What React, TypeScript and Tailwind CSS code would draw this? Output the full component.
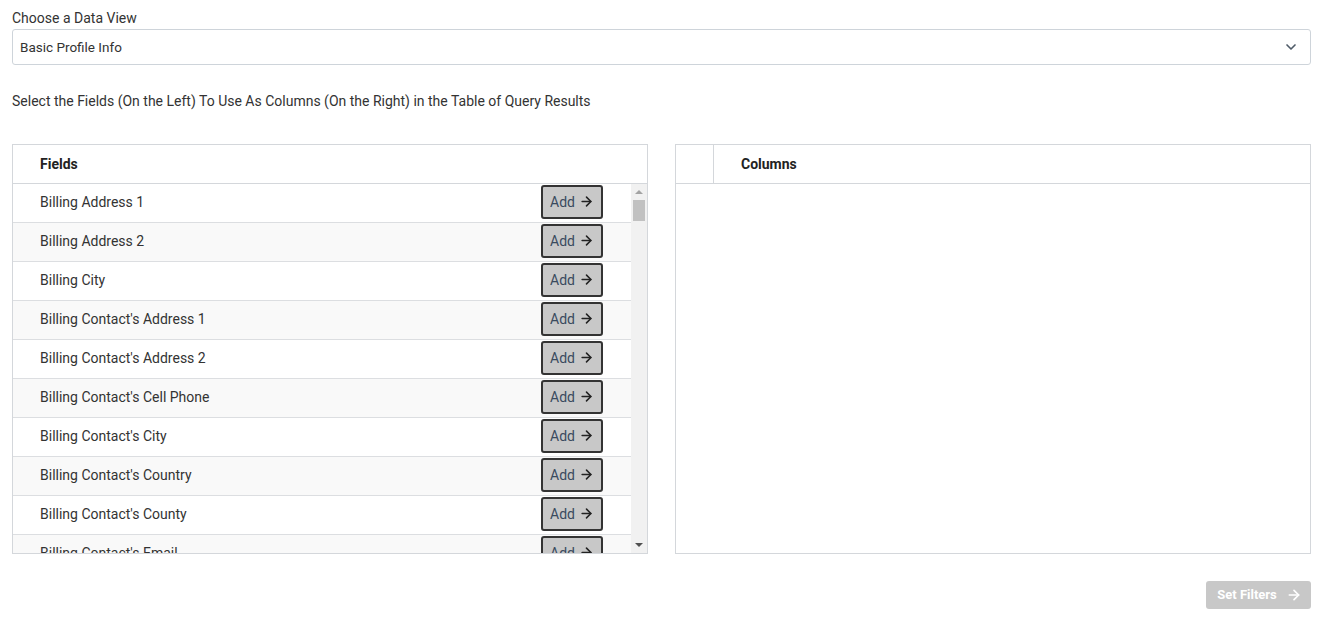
import { ArrowRight, ChevronDown } from 'lucide-react'

const bases = [
  'Address 1', 'Address 2', 'City', 'Country', 'County', 'Email', 'Fax', 'First Name',
  'Last Name', 'Phone', 'Postal Code', 'State', 'Title', 'Work Phone',
]

const fields = [
  'Billing Address 1',
  'Billing Address 2',
  'Billing City',
  "Billing Contact's Address 1",
  "Billing Contact's Address 2",
  "Billing Contact's Cell Phone",
  "Billing Contact's City",
  "Billing Contact's Country",
  "Billing Contact's County",
  "Billing Contact's Email",
  "Billing Contact's Fax",
  "Billing Contact's First Name",
  "Billing Contact's Last Name",
  "Billing Contact's Phone",
  "Billing Contact's Postal Code",
  "Billing Contact's State",
  'Billing Country',
  'Billing County',
  'Billing Postal Code',
  'Billing State',
  ...['Mailing', 'Primary Contact', 'Shipping'].flatMap((p) => bases.map((b) => `${p} ${b}`)),
]

export default function App() {
  return (
    <div className="pl-3 pr-[13px] pt-2 text-[#333] text-[14px]" style={{ fontFamily: 'Roboto, "Noto Sans", sans-serif' }}>
      <div className="leading-5 mb-[1px]">Choose a Data View</div>
      <div className="h-9 border border-[#ced4da] rounded-[3px] flex items-center justify-between pl-[7px] pr-[11px]">
        <span className="text-[13.5px] text-[#333]">Basic Profile Info</span>
        <ChevronDown className="w-4 h-4 text-[#4f5b68]" strokeWidth={2.5} />
      </div>

      <div className="leading-5 mt-[26px] text-[14px]">
        Select the Fields (On the Left) To Use As Columns (On the Right) in the Table of Query Results
      </div>

      <div className="grid grid-cols-2 gap-[27px] mt-[33px]">
        {/* Fields */}
        <div className="border border-[#d4d7db] h-[410px] flex flex-col">
          <div className="h-[39px] border-b border-[#d4d7db] flex items-center pl-[27px] font-bold text-[14px] text-[#222] shrink-0">
            Fields
          </div>
          <div className="flex-1 flex min-h-0">
            <div className="flex-1 overflow-hidden">
              {fields.map((f, i) => (
                <div
                  key={f + i}
                  className={`h-[39px] border-b border-[#dcdee1] flex items-center justify-between pl-[27px] pr-[28px] ${i % 2 === 1 ? 'bg-[#f9f9f9]' : 'bg-white'}`}
                >
                  <span className="text-[14px] text-[#333] -mt-[1px]">{f}</span>
                  <button className="h-[34px] w-[62px] border-2 border-[#333] rounded-[3px] bg-[#c8c8c8] flex items-center justify-center gap-[4px] text-[14px] text-[#3a4a5e] -mt-[2px]">
                    Add
                    <ArrowRight className="w-[15px] h-[15px] text-[#222] -mt-[2px]" strokeWidth={2.5} />
                  </button>
                </div>
              ))}
            </div>
            {/* scrollbar */}
            <div className="w-4 bg-[#f1f1f1] flex flex-col shrink-0">
              <div className="h-4 flex items-center justify-center">
                <div className="w-0 h-0 border-l-[4px] border-r-[4px] border-b-[4px] border-l-transparent border-r-transparent border-b-[#a3a3a3]" />
              </div>
              <div className="mx-[2px] h-[21px] bg-[#c1c1c1]" />
              <div className="flex-1" />
              <div className="h-4 flex items-center justify-center">
                <div className="w-0 h-0 border-l-[4px] border-r-[4px] border-t-[4px] border-l-transparent border-r-transparent border-t-[#505050]" />
              </div>
            </div>
          </div>
        </div>

        {/* Columns */}
        <div className="border border-[#d4d7db] h-[410px] flex flex-col">
          <div className="h-[39px] border-b border-[#d4d7db] flex shrink-0">
            <div className="w-[38px] border-r border-[#d4d7db]" />
            <div className="flex items-center pl-[27px] font-bold text-[14px] text-[#222]">Columns</div>
          </div>
          <div className="flex-1" />
        </div>
      </div>

      <div className="flex justify-end mt-[27px]">
        <button className="h-7 w-[105px] rounded-[3px] bg-[#c8c8c8] text-white font-bold text-[13px] flex items-center justify-center gap-[9px] pl-[2px]">
          Set Filters
          <ArrowRight className="w-4 h-4" strokeWidth={2.5} />
        </button>
      </div>
    </div>
  )
}
